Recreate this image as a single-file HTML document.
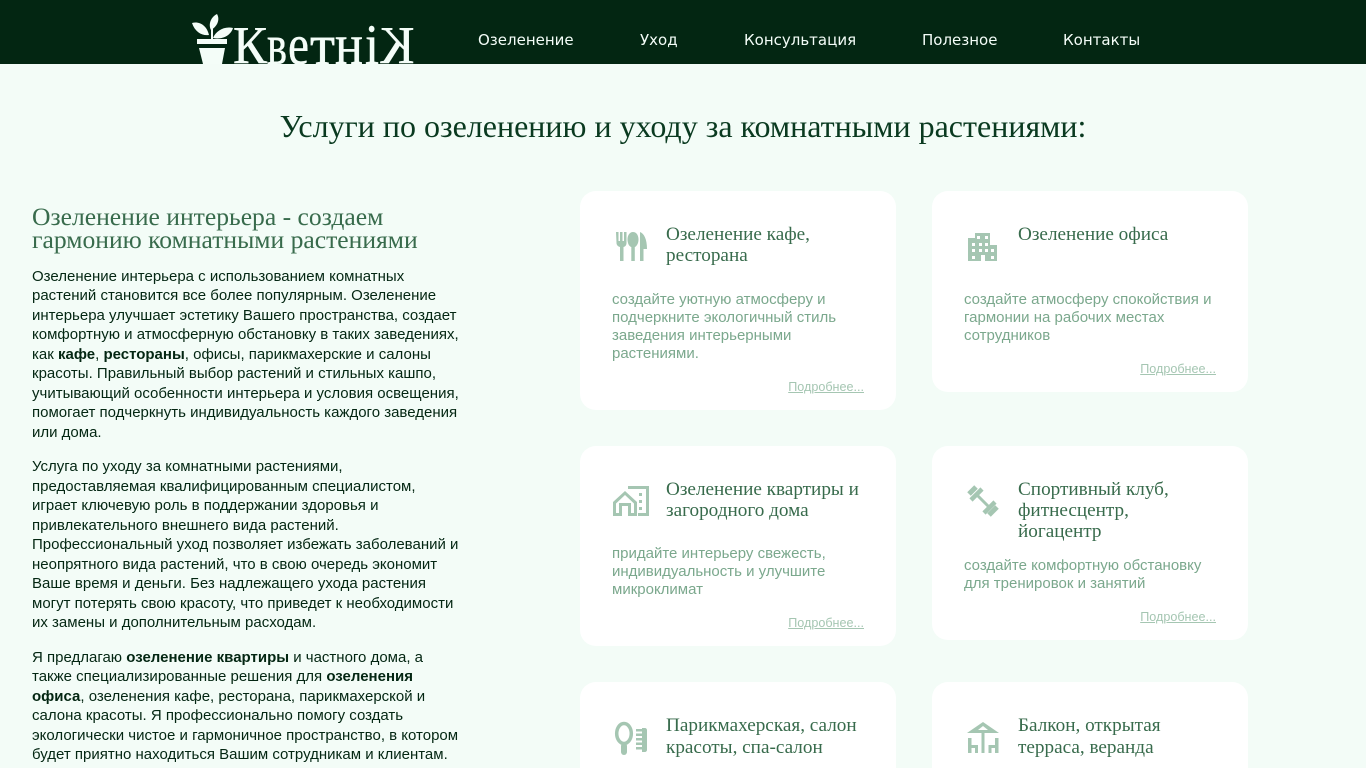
<!DOCTYPE html>
<html lang="ru"><head><meta charset="utf-8"><title>Кветник</title>
<style>
*{box-sizing:border-box}
html,body{margin:0;padding:0;width:1366px;height:768px;overflow:hidden;background:#f3fcf7;font-family:"Liberation Sans",sans-serif}
#w{position:relative;width:1366px;height:768px;overflow:hidden}
header{position:absolute;left:0;top:0;width:1366px;height:64px;background:#032612;overflow:hidden}
.nav{position:absolute;top:31px;color:#f4fdf8;font:15px/19px "DejaVu Sans",sans-serif;white-space:nowrap}
h1{position:absolute;left:0;top:106px;width:1366px;margin:0;text-align:center;font:400 32px/40px "Liberation Serif",serif;color:#0a3a20}
.left{position:absolute;left:32px;top:205px;width:440px;color:#032612;font-size:15px;line-height:19.5px}
.left h2{margin:0 0 15px;font:400 25.6px/23.4px "Liberation Serif",serif;color:#386b4c}
.left p{margin:0 0 15px;white-space:nowrap}
.left p:last-child{margin:0}
.card{position:absolute;width:316px;background:#fff;border-radius:16px}
.card h3{position:absolute;left:86px;top:33px;margin:0;font:400 19.2px/21.2px "Liberation Serif",serif;color:#386b4c;white-space:nowrap}
.card p{position:absolute;left:32px;margin:0;font-size:15px;line-height:18px;color:#7ba88d;white-space:nowrap}
.card a{position:absolute;right:32px;font-size:12.6px;line-height:15px;color:#a5c6b2;text-decoration:underline}
.card svg{position:absolute;left:32px;top:36px;width:38px;height:38px;fill:#a5c6b2;stroke:none}
</style></head><body><div id="w">
<header>
<svg style="position:absolute;left:192px;top:13px" width="44" height="51" viewBox="0 0 44 51" fill="#f4fdf8"><path d="M25 1c3 5 1 12-6 16c-3-6 0-13 6-16zM0 10c8-2 15 3 17 12c-7 1-14-3-17-12zM41 15c-2 7-10 12-20 10c3-7 11-12 20-10z"/><rect x="19" y="15" width="2" height="11"/><rect x="5" y="26" width="30" height="5"/><path d="M7 35h26l-3 16H11z"/></svg>
<svg style="position:absolute;left:0;top:0" width="500" height="64" fill="#f4fdf8" font-family="Liberation Serif" stroke="#f4fdf8" stroke-width=".4">
<text x="233" y="63" font-size="53" textLength="34" lengthAdjust="spacingAndGlyphs">К</text>
<g transform="translate(0,64) scale(1,1.15)" font-size="50">
<text x="267" y="0" textLength="20" lengthAdjust="spacingAndGlyphs">в</text>
<text x="288" y="0" textLength="21" lengthAdjust="spacingAndGlyphs">е</text>
<text x="310" y="0" textLength="25" lengthAdjust="spacingAndGlyphs">т</text>
<text x="335" y="0" textLength="28" lengthAdjust="spacingAndGlyphs">н</text>
<text x="365" y="0" textLength="14" lengthAdjust="spacingAndGlyphs">і</text>
</g>
<text transform="translate(414.500,63) scale(-1,1)" x="0" y="0" font-size="53" textLength="34" lengthAdjust="spacingAndGlyphs">К</text>
</svg>
<span class="nav" style="left:478px">Озеленение</span>
<span class="nav" style="left:640px">Уход</span>
<span class="nav" style="left:744px">Консультация</span>
<span class="nav" style="left:922px">Полезное</span>
<span class="nav" style="left:1063px">Контакты</span>
</header>
<h1>Услуги по озеленению и уходу за комнатными растениями:</h1>
<div class="left">
<h2>Озеленение интерьера - создаем<br>гармонию комнатными растениями</h2>
<p>Озеленение интерьера с использованием комнатных<br>растений становится все более популярным. Озеленение<br>интерьера улучшает эстетику Вашего пространства, создает<br>комфортную и атмосферную обстановку в таких заведениях,<br>как <b>кафе</b>, <b>рестораны</b>, офисы, парикмахерские и салоны<br>красоты. Правильный выбор растений и стильных кашпо,<br>учитывающий особенности интерьера и условия освещения,<br>помогает подчеркнуть индивидуальность каждого заведения<br>или дома.</p>
<p>Услуга по уходу за комнатными растениями,<br>предоставляемая квалифицированным специалистом,<br>играет ключевую роль в поддержании здоровья и<br>привлекательного внешнего вида растений.<br>Профессиональный уход позволяет избежать заболеваний и<br>неопрятного вида растений, что в свою очередь экономит<br>Ваше время и деньги. Без надлежащего ухода растения<br>могут потерять свою красоту, что приведет к необходимости<br>их замены и дополнительным расходам.</p>
<p>Я предлагаю <b>озеленение квартиры</b> и частного дома, а<br>также специализированные решения для <b>озеленения</b><br><b>офиса</b>, озеленения кафе, ресторана, парикмахерской и<br>салона красоты. Я профессионально помогу создать<br>экологически чистое и гармоничное пространство, в котором<br>будет приятно находиться Вашим сотрудникам и клиентам.</p>
</div>

<div class="card" style="left:580px;top:191px;height:219px">
<svg viewBox="0 0 38 38"><path d="M4 5h2.500v9h1.500V5h2.500v9H12V5h2.500v11c0 2-1 3.500-3 4V34h-3.500V20c-2-.5-3.500-2-3.500-4zM21 5c3.500 0 5.500 3.500 5.500 7.500S24.500 19.500 22.800 20V34h-3.500V20c-2-.5-3.800-3.500-3.800-7.500S17.500 5 21 5zM28 5c4 1.500 7 7 7 17h-3.500V34H28z"/></svg>
<h3>Озеленение кафе,<br>ресторана</h3>
<p style="top:100px">создайте уютную атмосферу и<br>подчеркните экологичный стиль<br>заведения интерьерными<br>растениями.</p>
<a style="top:189px">Подробнее...</a>
</div>

<div class="card" style="left:932px;top:191px;height:201px">
<svg viewBox="0 0 38 38"><path fill-rule="evenodd" d="M11 6h15v12h7v16H21v-6h-4v6H4V11h7zM13 9v3h3V9zM21 9v3h3V9zM8 16v3h3v-3zM15 16v3h3v-3zM21 16v3h3v-3zM8 22v3h3v-3zM15 22v3h3v-3zM21 22v3h3v-3zM27 22v3h3v-3zM8 29v3h3v-3zM27 29v3h3v-3z"/></svg>
<h3>Озеленение офиса</h3>
<p style="top:100px">создайте атмосферу спокойствия и<br>гармонии на рабочих местах<br>сотрудников</p>
<a style="top:171px">Подробнее...</a>
</div>

<div class="card" style="left:580px;top:446px;height:200px">
<svg viewBox="0 0 38 38"><path fill-rule="evenodd" d="M16 4h21v30H26v-3h8V7H16zM27 11h3v3h-3zM27 18h3v3h-3zM27 25h3v3h-3zM13 9l12 11v14H16V24h-6v10H1V20zM13 13L4 21.500V31h3V21h12v10h3v-9.500z"/></svg>
<h3>Озеленение квартиры и<br>загородного дома</h3>
<p style="top:99px">придайте интерьеру свежесть,<br>индивидуальность и улучшите<br>микроклимат</p>
<a style="top:170px">Подробнее...</a>
</div>

<div class="card" style="left:932px;top:446px;height:194px">
<svg viewBox="0 0 38 38"><g fill="none" stroke="#a5c6b2"><path stroke-width="3" d="M12 12L25 25"/><path stroke-width="4.500" d="M7 18L18 7M20 31L31 20"/><path stroke-width="5" d="M5 12L12 5M25 33L33 25"/></g></svg>
<h3>Спортивный клуб,<br>фитнесцентр,<br>йогацентр</h3>
<p style="top:111px">создайте комфортную обстановку<br>для тренировок и занятий</p>
<a style="top:164px">Подробнее...</a>
</div>

<div class="card" style="left:580px;top:682px;height:86px;border-radius:16px 16px 0 0">
<svg viewBox="0 0 38 38"><ellipse cx="12" cy="15.500" rx="7.300" ry="10" fill="none" stroke="#a5c6b2" stroke-width="3.500"/><rect x="9" y="25" width="6" height="12" rx="3"/><path d="M30 10h3c1 0 2 1 2 2v20c0 1-1 2-2 2h-3z"/><path d="M24 11h7v2.500h-7zM24 15.500h7V18h-7zM24 20h7v2.500h-7zM24 24.500h7V27h-7zM24 29h7v2.500h-7z"/></svg>
<h3 style="line-height:22px">Парикмахерская, салон<br>красоты, спа-салон</h3>
</div>

<div class="card" style="left:932px;top:682px;height:86px;border-radius:16px 16px 0 0">
<svg viewBox="0 0 38 38"><path fill-rule="evenodd" d="M19 4l16 11H3zM19 8l-5 4h10z"/><path d="M17.500 15h3v20h-3zM4 20h3.500v7H14v8h-3v-5H7.500v5H4zM31 20h3.500v15H31v-5h-3.500v5h-3v-8H31z"/></svg>
<h3 style="line-height:22px">Балкон, открытая<br>терраса, веранда</h3>
</div>
</div></body></html>
